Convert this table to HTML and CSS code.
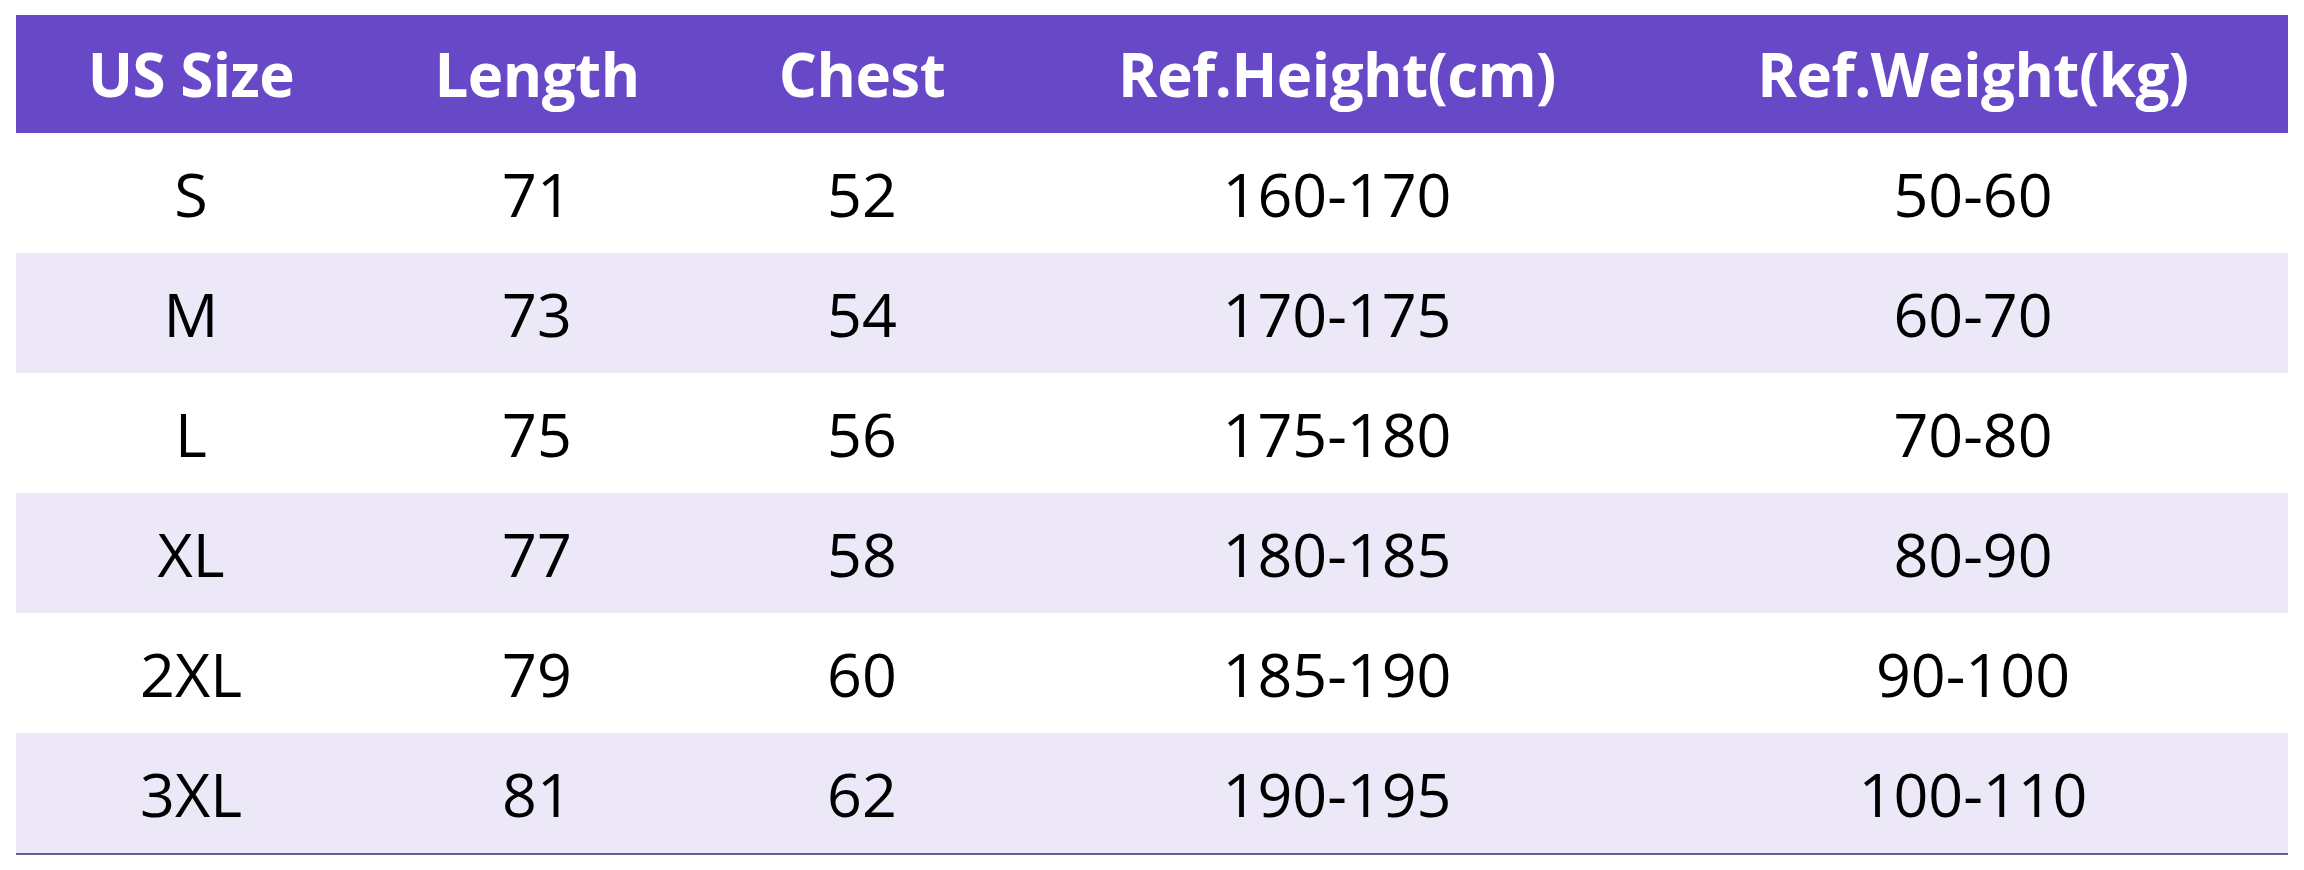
FILE: index.html
```html
<!DOCTYPE html>
<html lang="en">
<head>
<meta charset="utf-8">
<title>Size Chart</title>
<link rel="stylesheet" href="styles.css">
</head>
<body>
<table class="size-table">
  <colgroup>
    <col class="c1"><col class="c2"><col class="c3"><col class="c4"><col class="c5">
  </colgroup>
  <thead>
    <tr><th>US Size</th><th>Length</th><th>Chest</th><th>Ref.Height(cm)</th><th>Ref.Weight(kg)</th></tr>
  </thead>
  <tbody>
    <tr><td>S</td><td>71</td><td>52</td><td>160-170</td><td>50-60</td></tr>
    <tr class="alt"><td>M</td><td>73</td><td>54</td><td>170-175</td><td>60-70</td></tr>
    <tr><td>L</td><td>75</td><td>56</td><td>175-180</td><td>70-80</td></tr>
    <tr class="alt"><td>XL</td><td>77</td><td>58</td><td>180-185</td><td>80-90</td></tr>
    <tr><td>2XL</td><td>79</td><td>60</td><td>185-190</td><td>90-100</td></tr>
    <tr class="alt last"><td>3XL</td><td>81</td><td>62</td><td>190-195</td><td>100-110</td></tr>
  </tbody>
</table>
</body>
</html>
```

FILE: styles.css
```css
html, body {
  margin: 0;
  padding: 0;
  background: #ffffff;
}

body {
  padding: 15px 16px 0 16px;
  font-family: "Open Sans", "Noto Sans", sans-serif;
}

.size-table {
  width: 2272px;
  border-collapse: collapse;
  table-layout: fixed;
}

.c1 { width: 350px; }
.c2 { width: 342px; }
.c3 { width: 308px; }
.c4 { width: 642px; }
.c5 { width: 630px; }

.size-table th {
  height: 118px;
  padding: 0;
  background: #6749c8;
  color: #ffffff;
  font-weight: 700;
  font-size: 60px;
  text-align: center;
  vertical-align: middle;
  line-height: 1;
  letter-spacing: -0.5px;
}

.size-table td {
  height: 120px;
  padding: 0;
  color: #000000;
  font-weight: 400;
  font-size: 61px;
  text-align: center;
  vertical-align: middle;
  line-height: 1;
}

.size-table tr.alt td {
  background: #ece8f8;
}

.size-table tr.last td {
  border-bottom: 2px solid #6a5a9c;
}
```
